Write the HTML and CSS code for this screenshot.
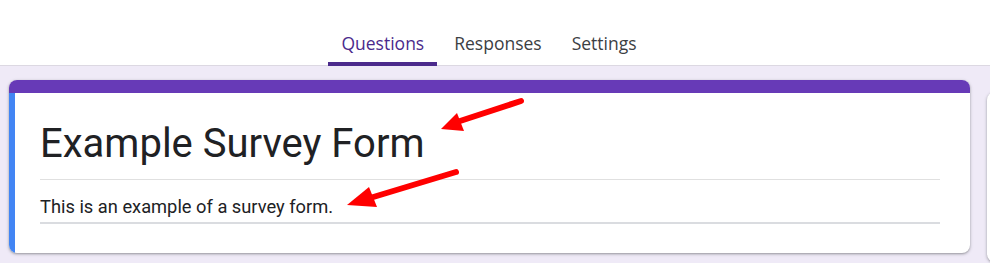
FILE: index.html
```html
<!DOCTYPE html>
<html>
<head>
    <title>Example Survey Form</title>
    <meta charset="utf-8">
    <link rel="stylesheet" href="styles.css">
</head>
<body>
    <header class="top">
        <nav class="tabs">
            <a href="#" class="tab active">Questions</a>
            <a href="#" class="tab">Responses</a>
            <a href="#" class="tab">Settings</a>
        </nav>
    </header>

    <main class="main">
        <!-- Form header card -->
        <section class="card">
            <div class="card-stripe"></div>
            <div class="card-body">
                <h1 class="form-title">Example Survey Form</h1>
                <p class="form-desc">This is an example of a survey form.</p>
            </div>
        </section>
        <aside class="toolbar"></aside>
    </main>

    <!-- annotation arrows -->
    <svg class="arrows" width="990" height="263" viewBox="0 0 990 263">
        <line x1="521" y1="101" x2="457" y2="122" stroke="#ff0000" stroke-width="6" stroke-linecap="round"/>
        <polygon points="441,129 457,113 464,131" fill="#ff0000"/>
        <line x1="456" y1="172" x2="370" y2="198" stroke="#ff0000" stroke-width="6" stroke-linecap="round"/>
        <polygon points="347,205 369,187 377,207" fill="#ff0000"/>
    </svg>
</body>
</html>
```

FILE: styles.css
```css
body {
    margin: 0;
    background: #efeaf7;
    font-family: Roboto, "Noto Sans", sans-serif;
    overflow: hidden;
    position: relative;
    height: 263px;
}

.top {
    height: 66px;
    background: #ffffff;
    box-shadow: inset 0 -1px 0 #dcd8e2;
}

.tabs {
    display: flex;
    justify-content: center;
    gap: 4px;
    height: 66px;
    padding-right: 12px;
}

.tab {
    display: block;
    padding: 33px 13px 9px;
    font-family: "Open Sans", Roboto, sans-serif;
    font-size: 17.5px;
    font-weight: 500;
    line-height: 20px;
    color: #3c4043;
    text-decoration: none;
    border-bottom: 4px solid transparent;
}

.tab.active {
    color: #4b2a8c;
    border-bottom-color: #4b2a8c;
    border-radius: 3px 3px 0 0;
}

.main {
    display: flex;
    align-items: flex-start;
    gap: 17px;
    padding: 14px 0 0 9px;
}

.card {
    flex: 0 0 961px;
    background: #ffffff;
    border-radius: 8px;
    overflow: hidden;
    box-shadow: 0 1px 2px rgba(60, 64, 67, 0.35), 0 1px 3px 1px rgba(60, 64, 67, 0.15);
}

.card-stripe {
    height: 13px;
    background: #673ab7;
}

.card-body {
    border-left: 6px solid #4285f4;
    padding: 25px 30px 29px 25px;
}

.form-title {
    margin: 0;
    font-size: 40px;
    font-weight: 400;
    line-height: 52px;
    color: #202124;
    padding-bottom: 9px;
    border-bottom: 1px solid #e0e0e0;
}

.form-desc {
    margin: 0;
    font-size: 18.3px;
    line-height: 24px;
    color: #202124;
    padding-top: 15px;
    padding-bottom: 3px;
    border-bottom: 2px solid #dadce0;
}

.toolbar {
    flex: 0 0 50px;
    height: 170px;
    margin-top: 12px;
    background: #ffffff;
    border-radius: 8px;
    box-shadow: 0 1px 2px rgba(60, 64, 67, 0.3), 0 1px 3px 1px rgba(60, 64, 67, 0.15);
}

.arrows {
    position: absolute;
    left: 0;
    top: 0;
    pointer-events: none;
}
```
